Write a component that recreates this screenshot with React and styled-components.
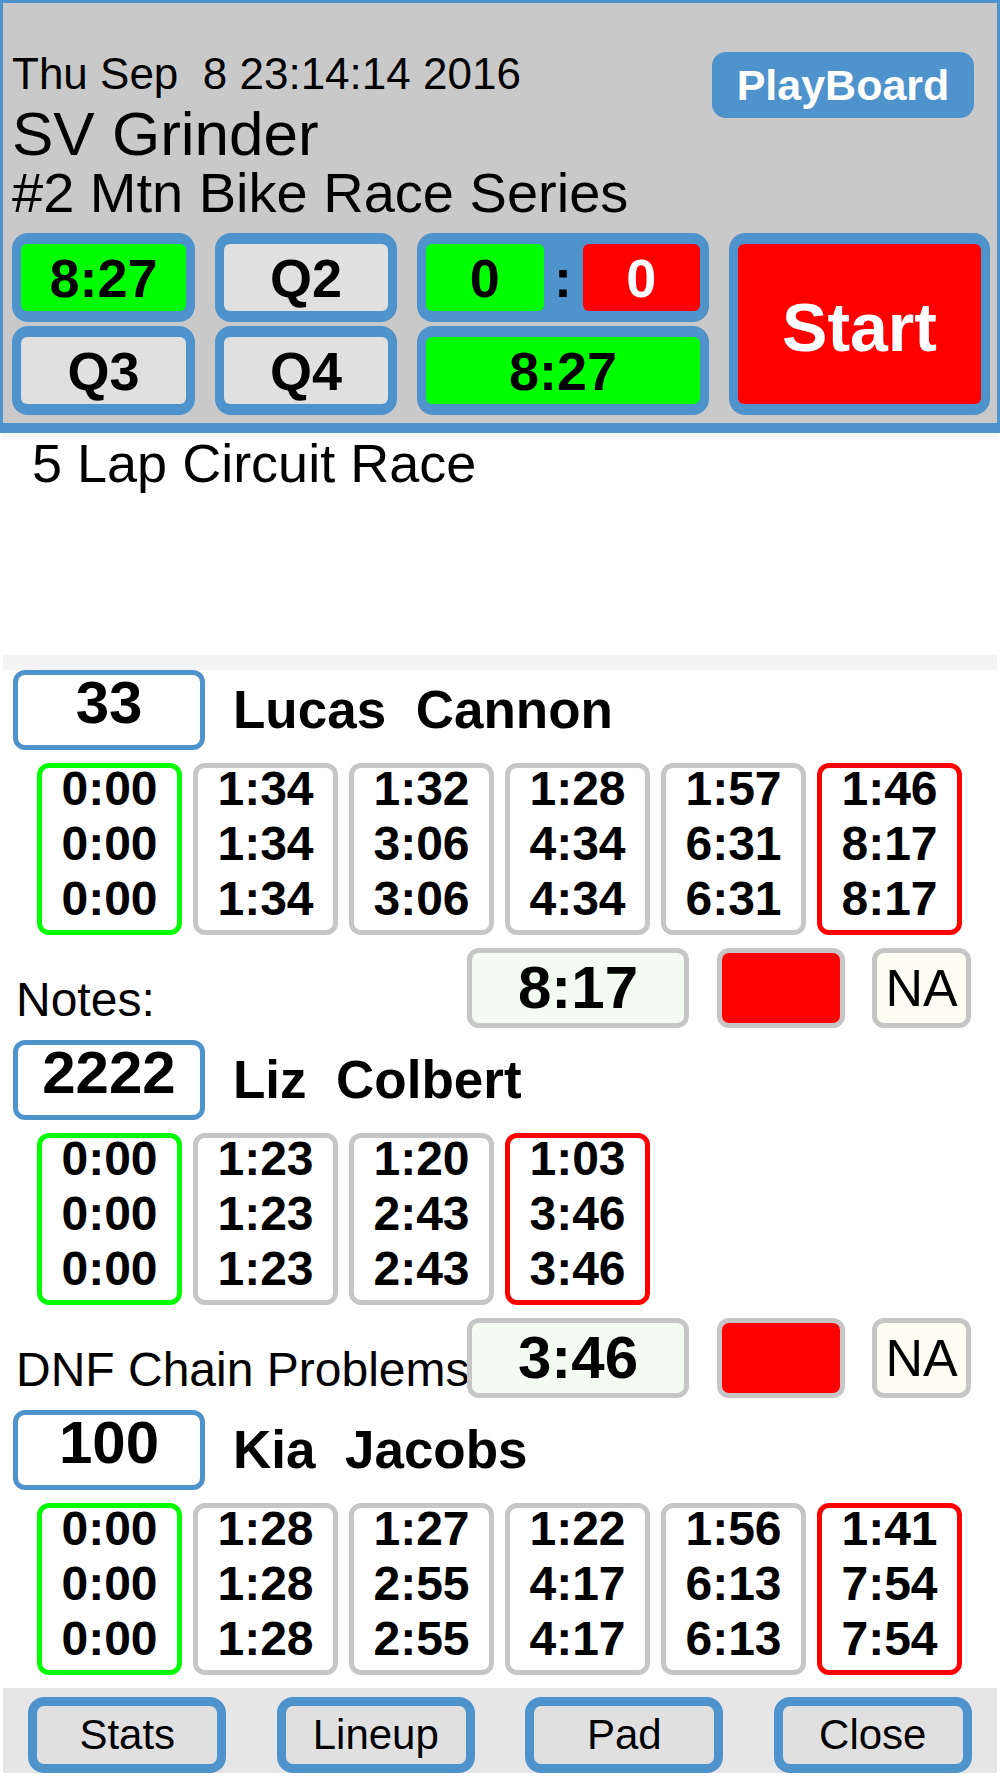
import React from 'react';
import styled, { createGlobalStyle } from 'styled-components';

const BLUE = '#4f93cd';
const LAP_GRAY = '#c6c6c6';

const GlobalStyle = createGlobalStyle`
  html, body { margin: 0; padding: 0; background: #fff; }
  body { font-family: "Liberation Sans", Arial, Helvetica, sans-serif; color: #000; }
  * { box-sizing: border-box; }
`;

const Page = styled.div`
  width: 1000px;
  height: 1778px;
  display: flex;
  flex-direction: column;
  overflow: hidden;
  padding-bottom: 5px;
  background: #fff;
`;

const Header = styled.header`
  flex: none;
  background: #c9c9c9;
  border: 3px solid ${BLUE};
  border-bottom-width: 10px;
  padding: 42px 7px 8px 9px;
`;

const TopRow = styled.div`
  display: flex;
  justify-content: space-between;
  align-items: flex-start;
`;

const TitleBlock = styled.div`
  display: flex;
  flex-direction: column;
`;

const DateLine = styled.div`
  font-size: 44px;
  line-height: 58px;
  white-space: pre;
`;

const Title = styled.div`
  font-size: 62px;
  line-height: 62px;
`;

const Subtitle = styled.div`
  font-size: 56px;
  line-height: 56px;
`;

const PlayBoardButton = styled.button`
  width: 262px;
  height: 66px;
  margin: 7px 16px 0 0;
  border: none;
  border-radius: 14px;
  background: ${BLUE};
  color: #fff;
  font-family: inherit;
  font-weight: bold;
  font-size: 43px;
  line-height: 66px;
  padding: 0;
`;

const ControlGrid = styled.div`
  margin-top: 12px;
  display: grid;
  grid-template-columns: 183px 182px 292px 261px;
  grid-template-rows: 89px 89px;
  column-gap: 20px;
  row-gap: 4px;
`;

const Cell = styled.div`
  background: ${BLUE};
  border-radius: 16px;
  padding: 11px 9px;
  display: flex;
  grid-row: ${(p) => (p.$tall ? '1 / span 2' : 'auto')};
  grid-column: ${(p) => p.$col || 'auto'};
`;

const Fill = styled.div`
  flex: 1;
  border-radius: 6px;
  background: ${(p) => p.$bg};
  color: ${(p) => p.$fg || '#000'};
  display: flex;
  align-items: center;
  justify-content: center;
  font-weight: bold;
  font-size: ${(p) => p.$size || 54}px;
  line-height: 1;
  padding-top: ${(p) => p.$shift || 0}px;
`;

const Colon = styled.div`
  width: 39px;
  display: flex;
  align-items: center;
  justify-content: center;
  font-weight: bold;
  font-size: 54px;
  line-height: 1;
  color: #000;
`;

const Main = styled.main`
  flex: 1;
  min-height: 0;
  overflow: hidden;
  margin: 0 3px;
  background: #fff;
`;

const Description = styled.div`
  height: 222px;
  padding-left: 29px;
  font-size: 54px;
  line-height: 60px;
  background: linear-gradient(to bottom, #fff 0, #f4f4f4 2px, #f7f7f7 5px, #fff 8px);
`;

const SectionBar = styled.div`
  height: 15px;
  background: #f4f4f4;
`;

const Rider = styled.section`
  display: flex;
  flex-direction: column;
  padding-bottom: 12px;
`;

const RiderHead = styled.div`
  display: flex;
  align-items: flex-start;
  gap: 28px;
  padding-left: 10px;
  height: 80px;
`;

const Bib = styled.div`
  width: 192px;
  height: 80px;
  border: 5px solid ${BLUE};
  border-radius: 12px;
  text-align: center;
  font-weight: bold;
  font-size: 60px;
  line-height: 56px;
  padding-bottom: 14px;
`;

const RiderName = styled.div`
  font-weight: bold;
  font-size: 53px;
  line-height: 80px;
  white-space: pre;
`;

const LapRow = styled.div`
  display: flex;
  gap: 11px;
  padding-left: 34px;
  margin-top: 13px;
`;

const LapBox = styled.div`
  width: 145px;
  height: 172px;
  border: 5px solid ${(p) => p.$border};
  border-radius: 12px;
  display: flex;
  flex-direction: column;
  justify-content: center;
  align-items: center;
  padding-bottom: 12px;
  font-weight: bold;
  font-size: 48px;
  line-height: 55px;
`;

const NotesRow = styled.div`
  display: flex;
  align-items: flex-start;
  margin-top: 13px;
  height: 80px;
  padding: 0 26px 0 13px;
`;

const NoteLabel = styled.div`
  flex: 1;
  min-width: 0;
  font-size: 48px;
  line-height: 48px;
  margin-top: 28px;
  white-space: nowrap;
`;

const ResultBox = styled.div`
  width: ${(p) => p.$w}px;
  height: 80px;
  margin-right: ${(p) => p.$mr || 0}px;
  border: 5px solid ${LAP_GRAY};
  border-radius: 12px;
  background: ${(p) => p.$bg};
  text-align: center;
  font-weight: ${(p) => (p.$bold ? 'bold' : 'normal')};
  font-size: ${(p) => p.$size || 52}px;
  line-height: 70px;
`;

const Footer = styled.footer`
  flex: none;
  height: 85px;
  margin: 0 3px;
  background: #e6e6e6;
  display: grid;
  grid-template-columns: repeat(4, 1fr);
  justify-items: center;
  align-items: end;
`;

const FooterButton = styled.button`
  width: 198px;
  height: 76px;
  border: 9px solid ${BLUE};
  border-radius: 16px;
  background: #e0e0e0;
  color: #000;
  font-family: inherit;
  font-size: 42px;
  line-height: 58px;
  padding: 0;
`;

const riders = [
  {
    bib: '33',
    name: 'Lucas  Cannon',
    laps: [
      ['0:00', '0:00', '0:00'],
      ['1:34', '1:34', '1:34'],
      ['1:32', '3:06', '3:06'],
      ['1:28', '4:34', '4:34'],
      ['1:57', '6:31', '6:31'],
      ['1:46', '8:17', '8:17'],
    ],
    note: 'Notes:',
    total: '8:17',
  },
  {
    bib: '2222',
    name: 'Liz  Colbert',
    laps: [
      ['0:00', '0:00', '0:00'],
      ['1:23', '1:23', '1:23'],
      ['1:20', '2:43', '2:43'],
      ['1:03', '3:46', '3:46'],
    ],
    note: 'DNF Chain Problems',
    total: '3:46',
  },
  {
    bib: '100',
    name: 'Kia  Jacobs',
    laps: [
      ['0:00', '0:00', '0:00'],
      ['1:28', '1:28', '1:28'],
      ['1:27', '2:55', '2:55'],
      ['1:22', '4:17', '4:17'],
      ['1:56', '6:13', '6:13'],
      ['1:41', '7:54', '7:54'],
    ],
  },
];

function lapBorder(i, n) {
  if (i === 0) return '#00ff00';
  if (i === n - 1) return '#ff0000';
  return LAP_GRAY;
}

export default function App() {
  return (
    <>
      <GlobalStyle />
      <Page>
        <Header>
          <TopRow>
            <TitleBlock>
              <DateLine>{'Thu Sep  8 23:14:14 2016'}</DateLine>
              <Title>SV Grinder</Title>
              <Subtitle>#2 Mtn Bike Race Series</Subtitle>
            </TitleBlock>
            <PlayBoardButton>PlayBoard</PlayBoardButton>
          </TopRow>
          <ControlGrid>
            <Cell>
              <Fill $bg="#00ff00">8:27</Fill>
            </Cell>
            <Cell>
              <Fill $bg="#e0e0e0">Q2</Fill>
            </Cell>
            <Cell>
              <Fill $bg="#00ff00">0</Fill>
              <Colon>:</Colon>
              <Fill $bg="#ff0000" $fg="#fff">0</Fill>
            </Cell>
            <Cell $tall $col="4">
              <Fill $bg="#ff0000" $fg="#fff" $size={68} $shift={6}>Start</Fill>
            </Cell>
            <Cell>
              <Fill $bg="#e0e0e0">Q3</Fill>
            </Cell>
            <Cell>
              <Fill $bg="#e0e0e0">Q4</Fill>
            </Cell>
            <Cell>
              <Fill $bg="#00ff00">8:27</Fill>
            </Cell>
          </ControlGrid>
        </Header>

        <Main>
          <Description>5 Lap Circuit Race</Description>
          <SectionBar />
          {riders.map((r) => (
            <Rider key={r.bib}>
              <RiderHead>
                <Bib>{r.bib}</Bib>
                <RiderName>{r.name}</RiderName>
              </RiderHead>
              <LapRow>
                {r.laps.map((lap, i) => (
                  <LapBox key={i} $border={lapBorder(i, r.laps.length)}>
                    {lap.map((t, j) => (
                      <div key={j}>{t}</div>
                    ))}
                  </LapBox>
                ))}
              </LapRow>
              {r.total && (
                <NotesRow>
                  <NoteLabel>{r.note}</NoteLabel>
                  <ResultBox $w={222} $mr={28} $bg="#f3fbf3" $bold $size={60}>
                    {r.total}
                  </ResultBox>
                  <ResultBox $w={128} $mr={27} $bg="#ff0000" />
                  <ResultBox $w={99} $bg="#fdfdf3">NA</ResultBox>
                </NotesRow>
              )}
            </Rider>
          ))}
        </Main>

        <Footer>
          <FooterButton>Stats</FooterButton>
          <FooterButton>Lineup</FooterButton>
          <FooterButton>Pad</FooterButton>
          <FooterButton>Close</FooterButton>
        </Footer>
      </Page>
    </>
  );
}
